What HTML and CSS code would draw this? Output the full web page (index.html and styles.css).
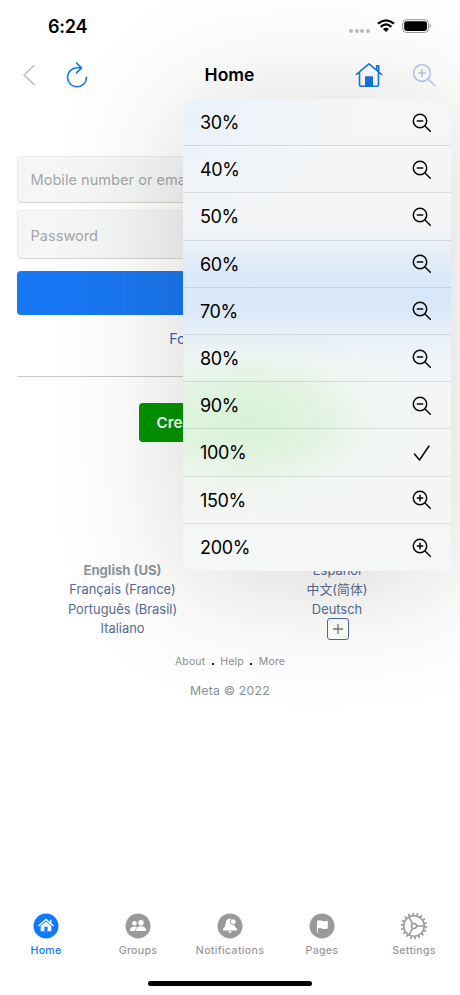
FILE: index.html
```html
<!DOCTYPE html>
<html lang="en">
<head>
<meta charset="utf-8">
<title>Home</title>
<link rel="stylesheet" href="styles.css">
</head>
<body>
<svg width="0" height="0" class="defs">
  <symbol id="minus" viewBox="0 0 20 20"><circle cx="8" cy="8" r="6.7"/><path d="M5.3 8h5.4"/><path class="handle" d="M13 13l5.3 5.2"/></symbol>
  <symbol id="plus" viewBox="0 0 20 20"><circle cx="8" cy="8" r="6.7"/><path d="M5.3 8h5.4M8 5.3v5.4"/><path class="handle" d="M13 13l5.3 5.2"/></symbol>
  <symbol id="check" viewBox="0 0 20 20"><path d="M2.5 11l5 6L17 3"/></symbol>
</svg>
<div class="phone">
  <header class="status">
    <span class="time">6:24</span>
    <span class="signal"><i></i><i></i><i></i><i></i></span>
    <svg class="wifi" width="18" height="14" viewBox="0 0 18 14"><g fill="none" stroke="#000" stroke-width="2.3"><path d="M1 4.7Q9-2 17 4.7"/><path d="M3.7 7.8Q9 3 14.3 7.8"/></g><path d="M6 9.9Q9 7.6 12 9.9L9 13z"/></svg>
    <svg class="battery" width="30" height="15" viewBox="0 0 30 15"><rect x=".7" y=".7" width="25.8" height="12.8" rx="3.8" fill="none" stroke="#999"/><rect x="2.2" y="2.2" width="22.8" height="9.8" rx="2.4"/><path d="M27.6 5v4.2q1.4-.6 1.4-2.1T27.6 5z" fill="#999"/></svg>
  </header>
  <nav class="navbar">
    <svg class="back" width="14" height="22" viewBox="0 0 14 22"><path d="M12 1.5L2 11l10 9.5"/></svg>
    <svg class="reload" width="24" height="28" viewBox="0 0 24 28"><path d="M21.5 16.2A9.5 9.5 0 1 1 12 6.8h4.5M11.5 2l5 4.9-5 5"/></svg>
    <h1>Home</h1>
    <svg class="house" width="28" height="26" viewBox="0 0 28 26"><path d="M1.3 12.5L14 1.8l12.7 10.7M4.5 10.5v12.3q0 1.4 1.4 1.4h16.2q1.4 0 1.4-1.4V10.5M21.7 8V3.7h2v6"/><path class="solid" d="M10.8 15h6.4v9h-6.4z"/></svg>
    <svg class="magnify" width="25" height="25" viewBox="0 0 20 20"><use href="#plus"/></svg>
  </nav>
  <main>
    <div class="field user">Mobile number or email</div>
    <div class="field pass">Password</div>
    <div class="login"></div>
    <div class="forgot">Forgot password?</div>
    <div class="rule"></div>
    <div class="create">Create new account</div>
    <div class="languages">
      <div><b>English (US)</b><span>Français (France)</span><span>Português (Brasil)</span><span>Italiano</span></div>
      <div><span>Español</span><span>中文(简体)</span><span>Deutsch</span><span class="more"><svg width="10" height="10" viewBox="0 0 10 10"><path d="M0 5h10M5 0v10"/></svg></span></div>
    </div>
    <div class="links"><span>About</span><i></i><span>Help</span><i></i><span>More</span></div>
    <div class="copyright">Meta © 2022</div>
  </main>
  <footer>
    <div class="tab active"><svg width="28" height="28" viewBox="0 0 28 28"><circle cx="14" cy="14" r="12.5"/><path class="wline" d="M6.5 14L14 7.5l7.5 6.5M18.7 11V7.7"/><path class="white" d="M8.7 14L14 9.5l5.3 4.5v5.2H8.7z"/><path d="M12.4 14.7h3.2v4.5h-3.2z"/></svg><span>Home</span></div>
    <div class="tab"><svg width="28" height="28" viewBox="0 0 28 28"><circle cx="14" cy="14" r="12.5"/><g class="white"><circle cx="10.5" cy="11.3" r="2.3"/><path d="M6 19q0-4.4 4.5-4.4 1.7 0 2.5.7-1.800 1.200-2 3.700z"/><circle cx="17" cy="10.700" r="2.800"/><path d="M11.800 19q.2-4.700 5.200-4.700t5.200 4.700z"/></g></svg><span>Groups</span></div>
    <div class="tab"><svg width="28" height="28" viewBox="0 0 28 28"><circle cx="14" cy="14" r="12.5"/><path class="white" d="M14 6.500q-4.300.4-4.300 5.300 0 3.200-2.700 5v1.700h14v-1.700q-2.700-1.800-2.700-5 0-4.900-4.300-5.300zM12 19.300h4q-.5 1.800-2 1.800t-2-1.800z"/><circle class="badge" cx="17.300" cy="9.700" r="2.900"/></svg><span>Notifications</span></div>
    <div class="tab"><svg width="28" height="28" viewBox="0 0 28 28"><circle cx="14" cy="14" r="12.5"/><path class="white" d="M9 8.700q2.500-1 5 0t5.800 0v7.800q-3.300 1-5.800 0t-4 0v4.300H9z"/></svg><span>Pages</span></div>
    <div class="tab gear"><svg width="28" height="28" viewBox="0 0 28 28"><circle cx="14" cy="14" r="10.300"/><circle class="teeth" cx="14" cy="14" r="12"/><circle cx="14" cy="14" r="2.500"/><path d="M16.500 14H24M12.700 11.800L9 5.200M12.700 16.200L9 22.800"/></svg><span>Settings</span></div>
  </footer>
  <div class="indicator"></div>
  <div class="menu">
    <div class="row"><span>30%</span><svg><use href="#minus"/></svg></div>
    <div class="row"><span>40%</span><svg><use href="#minus"/></svg></div>
    <div class="row"><span>50%</span><svg><use href="#minus"/></svg></div>
    <div class="row"><span>60%</span><svg><use href="#minus"/></svg></div>
    <div class="row"><span>70%</span><svg><use href="#minus"/></svg></div>
    <div class="row"><span>80%</span><svg><use href="#minus"/></svg></div>
    <div class="row"><span>90%</span><svg><use href="#minus"/></svg></div>
    <div class="row"><span>100%</span><svg><use href="#check"/></svg></div>
    <div class="row"><span>150%</span><svg><use href="#plus"/></svg></div>
    <div class="row"><span>200%</span><svg><use href="#plus"/></svg></div>
  </div>
</div>
</body>
</html>
```
FILE: styles.css
```css
* { box-sizing: border-box; }
body { margin: 0; background: #fff; font-family: Inter, "Noto Sans CJK SC", sans-serif; color: #000; }
.defs { position: absolute; }
.phone { position: relative; width: 460px; height: 995px; overflow: hidden; display: flex; flex-direction: column; }
.status { height: 52px; display: flex; align-items: center; padding: 0 28px 0 48px; }
.time { font-size: 18px; font-weight: 600; letter-spacing: -.2px; flex: 1; }
.signal { display: flex; gap: 1.7px; margin: 10px 7px 0 0; }
.signal i { width: 4px; height: 4px; border-radius: 50%; background: #bdbdbd; }
.wifi { margin-right: 7px; }
.navbar { height: 46px; display: flex; align-items: center; padding: 0 23px 0 22px; }
.navbar svg { fill: none; stroke: #1473e6; stroke-width: 1.6; stroke-linecap: round; stroke-linejoin: round; }
.navbar .back { stroke: #bbb; }
.navbar .reload { margin-left: 29px; }
.navbar h1 { margin: 0; flex: 1; text-align: center; font-size: 17.5px; line-height: 24px; font-weight: 600; padding-left: 15px; letter-spacing: 0; }
.navbar .house { margin-right: 29px; }
.house .solid { fill: #1473e6; }
.navbar .magnify { stroke: #b6cbed; stroke-width: 1.3; }
.magnify .handle { stroke-width: 2; }
main { flex: 1; padding: 58px 17px 0; display: flex; flex-direction: column; }
.field { height: 47px; border: 1px solid #e9eaeb; border-bottom-color: #d6d6d2; border-radius: 4px; background: #f5f6f7; padding-left: 12.5px; line-height: 47px; font-size: 14.6px; color: #a4a6a9; }
.pass { margin-top: 7px; height: 49px; line-height: 50px; }
.login { height: 44px; margin-top: 12px; border-radius: 4px; background: #1877f2; }
.forgot { margin-top: 14px; text-align: center; font-size: 14.4px; line-height: 19px; color: #3b64c4; }
.rule { height: 1px; margin-top: 28px; background: #c9cacc; }
.create { align-self: center; width: 182px; height: 39px; margin-top: 26px; border-radius: 4px; background: #009400; color: #fff; text-align: center; font-size: 15.2px; line-height: 39px; font-weight: 600; white-space: nowrap; }
.languages { display: grid; grid-template-columns: 1fr 1fr; margin: 119px -1px 0; font-size: 12.9px; line-height: 19.4px; color: #576b95; }
.languages > div { display: flex; flex-direction: column; align-items: center; }
.languages > div:first-child { padding-right: 1px; }
.languages b { color: #8d949e; font-weight: 700; font-size: 13.1px; }
.languages .more { width: 22px; height: 22px; border: 1px solid #5368a5; border-radius: 3px; display: grid; place-items: center; margin-top: -1px; margin-left: 1px; }
.more svg { fill: none; stroke: #777; stroke-width: 1.3; }
.links { display: flex; justify-content: center; align-items: center; gap: 6.5px; margin-top: 14px; font-size: 10.5px; line-height: 16px; color: #8b8f95; letter-spacing: .15px; }
.links i { width: 2px; height: 2px; background: #222; margin-top: 3px; }
.copyright { margin-top: 12px; text-align: center; font-size: 12.3px; line-height: 18px; color: #8b8f95; letter-spacing: .2px; }
footer { height: 50px; display: grid; grid-template-columns: repeat(5, 1fr); margin-bottom: 33px; }
.tab { display: flex; flex-direction: column; align-items: center; color: #999; font-size: 10.6px; line-height: 14px; letter-spacing: .3px; font-weight: 500; }
.tab svg { fill: currentColor; margin-bottom: 4px; }
.active { color: #0a7aff; }
.tab .white { fill: #fff; }
.tab .wline { fill: none; stroke: #fff; stroke-width: 1.5; }
.tab .badge { stroke: #999; stroke-width: 1; fill: #fff; }
.gear svg { fill: none; stroke: #999; stroke-width: 1.6; }
.gear .teeth { stroke-width: 2.4; stroke-dasharray: 1.7 2.4888; }
.indicator { position: absolute; left: 148px; top: 980.5px; width: 164px; height: 5px; border-radius: 3px; background: #000; }
.menu { position: absolute; left: 183px; top: 99px; width: 268px; height: 472px; border-radius: 12px; overflow: hidden; display: grid; grid-template-rows: repeat(10, 1fr);
  background:
    radial-gradient(ellipse 175px 95px at 65px 322px, rgba(211,242,209,.85), rgba(214,242,212,.68) 35%, rgba(225,245,223,.25) 70%, transparent),
    radial-gradient(ellipse 170px 110px at 0 20px, #e9f2f9, transparent),
    linear-gradient(#f5f6f6 0, #f4f5f7 120px, #edf2f8 140px, #d9e9f9 178px, #d8e8f9 205px, #e6eff8 235px, #f2f5f8 265px, #f4f6f6 300px, #f5f6f6);
  box-shadow: 0 10px 130px rgba(35,30,20,.19); }
.row { display: flex; align-items: center; justify-content: space-between; padding: 1px 19.5px 0 17px; border-bottom: 1px solid rgba(60,70,80,.14); font-size: 18px; letter-spacing: -.35px; }
.row:last-child { border: 0; }
.row svg { width: 20px; height: 20px; fill: none; stroke: #080808; stroke-width: 1.5; stroke-linecap: round; stroke-linejoin: round; }
.row .handle { stroke-width: 2; }
```
